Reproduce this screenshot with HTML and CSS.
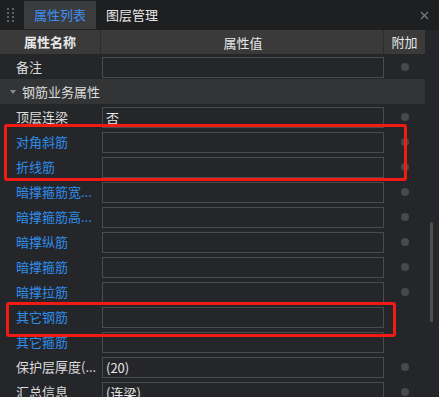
FILE: index.html
```
<!DOCTYPE html>
<html lang="zh-CN">
<head>
    <meta charset="UTF-8">
    <title>属性列表</title>
    <link rel="stylesheet" href="styles.css">
</head>
<body>
    <div class="panel">
        <div class="tabbar">
            <div class="grip">
                <span></span><span></span><span></span><span></span>
                <span></span><span></span><span></span><span></span>
            </div>
            <div class="tab active">属性列表</div>
            <div class="tab">图层管理</div>
            <div class="close">
                <svg width="9" height="9" viewBox="0 0 9 9"><path d="M1 1L8 8M8 1L1 8" stroke="#7a7a7a" stroke-width="1.3"/></svg>
            </div>
        </div>
        <div class="body">
            <div class="sheet">
                <div class="row head">
                    <div class="name">属性名称</div>
                    <div class="value">属性值</div>
                    <div class="extra">附加</div>
                </div>
                <div class="row">
                    <div class="name">备注</div>
                    <div class="value"><div class="box"></div></div>
                    <div class="extra"><i class="dot"></i></div>
                </div>
                <div class="row group">
                    <span class="caret"></span>钢筋业务属性
                </div>
                <div class="row">
                    <div class="name">顶层连梁</div>
                    <div class="value"><div class="box">否</div></div>
                    <div class="extra"><i class="dot"></i></div>
                </div>
                <div class="row">
                    <div class="name blue">对角斜筋</div>
                    <div class="value"><div class="box"></div></div>
                    <div class="extra"><i class="dot"></i></div>
                </div>
                <div class="row">
                    <div class="name blue">折线筋</div>
                    <div class="value"><div class="box"></div></div>
                    <div class="extra"><i class="dot"></i></div>
                </div>
                <div class="row">
                    <div class="name blue">暗撑箍筋宽...</div>
                    <div class="value"><div class="box"></div></div>
                    <div class="extra"><i class="dot"></i></div>
                </div>
                <div class="row">
                    <div class="name blue">暗撑箍筋高...</div>
                    <div class="value"><div class="box"></div></div>
                    <div class="extra"><i class="dot"></i></div>
                </div>
                <div class="row">
                    <div class="name blue">暗撑纵筋</div>
                    <div class="value"><div class="box"></div></div>
                    <div class="extra"><i class="dot"></i></div>
                </div>
                <div class="row">
                    <div class="name blue">暗撑箍筋</div>
                    <div class="value"><div class="box"></div></div>
                    <div class="extra"><i class="dot"></i></div>
                </div>
                <div class="row">
                    <div class="name blue">暗撑拉筋</div>
                    <div class="value"><div class="box"></div></div>
                    <div class="extra"><i class="dot"></i></div>
                </div>
                <div class="row">
                    <div class="name blue">其它钢筋</div>
                    <div class="value"><div class="box"></div></div>
                    <div class="extra"></div>
                </div>
                <div class="row">
                    <div class="name blue">其它箍筋</div>
                    <div class="value"><div class="box"></div></div>
                    <div class="extra"></div>
                </div>
                <div class="row">
                    <div class="name">保护层厚度(...</div>
                    <div class="value"><div class="box">(20)</div></div>
                    <div class="extra"><i class="dot"></i></div>
                </div>
                <div class="row">
                    <div class="name">汇总信息</div>
                    <div class="value"><div class="box">(连梁)</div></div>
                    <div class="extra"><i class="dot"></i></div>
                </div>
            </div>
            <div class="scroll"><div class="thumb"></div></div>
        </div>

        <!-- 标注框 -->
        <div class="mark mark-a"></div>
        <div class="mark mark-b"></div>
    </div>
</body>
</html>
```

FILE: styles.css
```
body {
    margin: 0;
    padding: 0;
    background-color: #252629;
    font-family: "Noto Sans CJK SC", "Noto Sans", sans-serif;
    font-size: 13px;
    color: #dcdcdc;
    overflow: hidden;
}
.panel {
    position: relative;
    width: 439px;
    height: 397px;
    overflow: hidden;
}
.tabbar {
    height: 30px;
    background-color: #1e1f21;
    display: flex;
    align-items: center;
}
.grip {
    width: 24px;
    height: 30px;
    display: grid;
    grid-template-columns: 2px 2px;
    grid-auto-rows: 2px;
    column-gap: 3px;
    row-gap: 2px;
    align-content: center;
    padding-left: 7px;
    box-sizing: border-box;
}
.grip span {
    background-color: #606060;
}
.tab {
    height: 28px;
    line-height: 28px;
    padding: 0 10px;
    color: #e6e6e6;
}
.tab.active {
    background-color: #3b3c3e;
    color: #3f8ff0;
}
.close {
    margin-left: auto;
    width: 30px;
    display: flex;
    justify-content: center;
    padding-top: 1px;
}
.body {
    display: flex;
}
.sheet {
    width: 425px;
}
.row {
    display: flex;
    height: 25px;
    align-items: center;
}
.name {
    width: 101px;
    padding-left: 16px;
    box-sizing: border-box;
    white-space: nowrap;
    overflow: hidden;
}
.name.blue {
    color: #2f8deb;
}
.value {
    width: 283px;
    padding-left: 1px;
    box-sizing: border-box;
    align-self: flex-start;
    padding-top: 3px;
}
.box {
    height: 21px;
    width: 282px;
    border: 1px solid #4a4b4d;
    box-sizing: border-box;
    line-height: 19px;
    padding-left: 3px;
    color: #e6e6e6;
}
.extra {
    width: 41px;
    display: flex;
    justify-content: center;
}
.dot {
    width: 8px;
    height: 8px;
    border-radius: 50%;
    background-color: #48494b;
    margin-left: 1px;
}
.head {
    height: 24px;
    background-color: #3a3a3b;
    color: #e8e8e8;
}
.head .name {
    padding-left: 0;
    text-align: center;
    font-weight: bold;
    border-right: 1px solid #2c2c2d;
    height: 24px;
    line-height: 24px;
}
.head .value {
    align-self: center;
    padding-top: 0;
    text-align: center;
}
.head .extra {
    border-left: 1px solid #2c2c2d;
    height: 24px;
    line-height: 24px;
    margin-left: -1px;
}
.group {
    background-color: #333436;
    padding-left: 22px;
    position: relative;
}
.caret {
    position: absolute;
    left: 10px;
    top: 11px;
    border-left: 3px solid transparent;
    border-right: 3px solid transparent;
    border-top: 4px solid #8a8a8a;
}
.scroll {
    width: 14px;
}
.thumb {
    width: 3px;
    height: 100px;
    margin-top: 192px;
    margin-left: 5px;
    border-radius: 2px;
    background-color: #4e4f51;
}
.mark {
    position: absolute;
    border: 3px solid #f21b14;
    border-radius: 3px;
    box-sizing: border-box;
}
.mark-a {
    left: 4px;
    top: 124px;
    width: 403px;
    height: 57px;
}
.mark-b {
    left: 6px;
    top: 302px;
    width: 390px;
    height: 35px;
}
```
